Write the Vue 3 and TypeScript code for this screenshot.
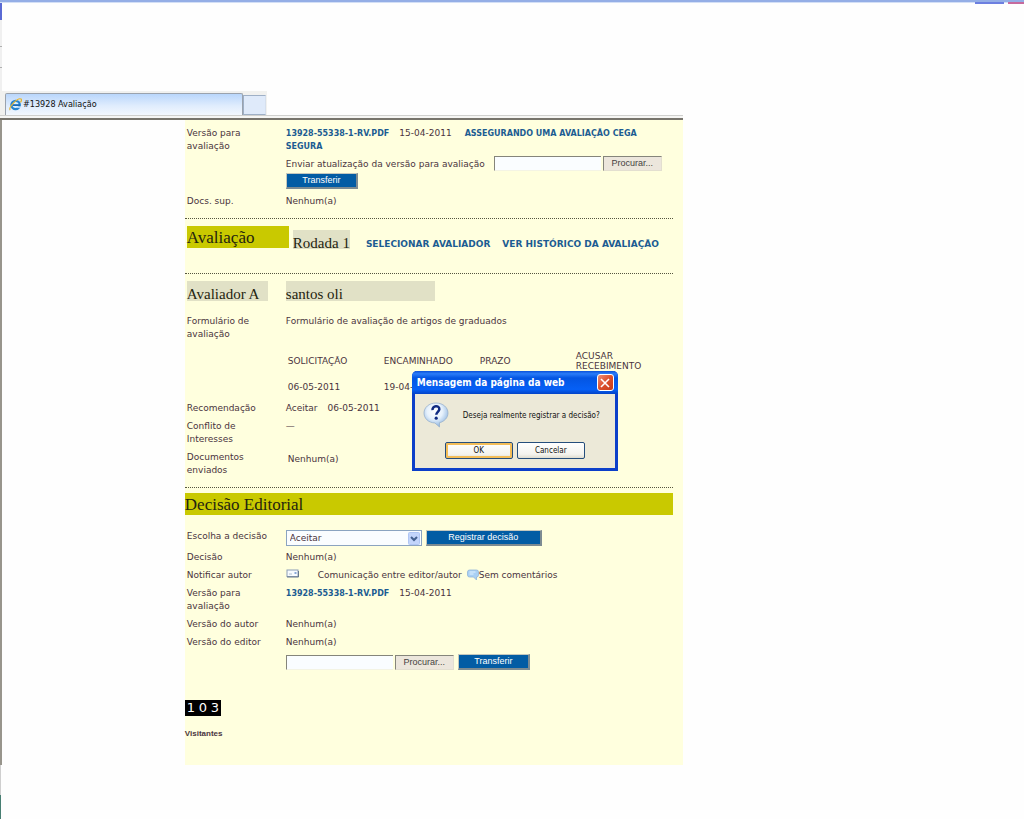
<script setup lang="ts">
import { ref } from 'vue'

interface DateColumn {
  title: string
  value: string
}

const dates: DateColumn[] = [
  { title: 'SOLICITAÇÃO', value: '06-05-2011' },
  { title: 'ENCAMINHADO', value: '19-04-2011' },
  { title: 'PRAZO', value: '' },
  { title: 'ACUSAR RECEBIMENTO', value: '' },
]

const decision = ref('Aceitar')
const reviewFile = ref('')
const editorFile = ref('')
const dialogOpen = ref(true)
</script>

<template>
  <div class="window">
    <header class="chrome">
      <div class="titlebar"><span class="caption-blue"></span><span class="caption-red"></span></div>
      <div class="toolbar-space"><div class="edge-top"></div></div>
      <nav class="tabs">
        <button class="tab" type="button">
          <svg class="ie" viewBox="0 0 13 13" aria-hidden="true">
            <circle cx="6.6" cy="7" r="4.2" fill="#d9f1ff" stroke="#2585cf" stroke-width="2.3" />
            <path d="M3.5 7.1H10.8" stroke="#1769b6" stroke-width="1.8" />
            <path d="M8.2 8.4H12v1.4H8.2z" fill="#d5e8fd" />
            <path d="M1.2 12C-.9 9.4 8.8-.7 12 1c1 .6.3 2.2-.5 3.4" fill="none" stroke="#e8b62e" stroke-width="1.2" />
          </svg>
          <span>#13928 Avaliação</span>
        </button>
        <button class="new-tab" type="button" aria-label="Nova guia"></button>
      </nav>
      <div class="frame-line"></div>
    </header>

    <div class="viewport">
      <main class="page">
        <section>
          <div class="row">
            <div class="label">Versão para avaliação</div>
            <div class="value">
              <p>
                <a href="#">13928-55338-1-RV.PDF</a><span class="date">15-04-2011</span><a href="#">ASSEGURANDO UMA AVALIAÇÃO CEGA SEGURA</a>
              </p>
              <div class="upload">
                <label for="review-file">Enviar atualização da versão para avaliação</label>
                <div class="picker">
                  <input id="review-file" v-model="reviewFile" type="text" />
                  <button class="browse" type="button">Procurar...</button>
                </div>
              </div>
              <button class="action" type="button">Transferir</button>
            </div>
          </div>
          <div class="row docs">
            <div class="label">Docs. sup.</div>
            <div class="value">Nenhum(a)</div>
          </div>
        </section>

        <section class="round">
          <h2>Avaliação</h2>
          <h3>Rodada 1</h3>
          <a class="select-reviewer" href="#">SELECIONAR AVALIADOR</a>
          <a class="history" href="#">VER HISTÓRICO DA AVALIAÇÃO</a>
        </section>

        <section class="reviewer">
          <div class="row names">
            <div class="label"><h3>Avaliador A</h3></div>
            <div class="value"><h3>santos oli</h3></div>
          </div>
          <div class="row">
            <div class="label">Formulário de avaliação</div>
            <div class="value">Formulário de avaliação de artigos de graduados</div>
          </div>
          <div class="row dates-row">
            <div class="label"></div>
            <table>
              <thead>
                <tr><th v-for="d in dates" :key="d.title" scope="col"><span>{{ d.title }}</span></th></tr>
              </thead>
              <tbody>
                <tr><td v-for="d in dates" :key="d.title">{{ d.value }}</td></tr>
              </tbody>
            </table>
          </div>
          <div class="row">
            <div class="label">Recomendação</div>
            <div class="value">Aceitar<span class="date">06-05-2011</span></div>
          </div>
          <div class="row">
            <div class="label">Conflito de Interesses</div>
            <div class="value">—</div>
          </div>
          <div class="row">
            <div class="label">Documentos enviados</div>
            <div class="value sent">Nenhum(a)</div>
          </div>
        </section>

        <section class="decision">
          <h2>Decisão Editorial</h2>
          <div class="row">
            <label class="label" for="decision">Escolha a decisão</label>
            <div class="value controls">
              <div class="combo">
                <select id="decision" v-model="decision">
                  <option>Aceitar</option>
                </select>
                <svg viewBox="0 0 12 13" aria-hidden="true">
                  <rect x=".5" y=".5" width="11" height="12" rx="1" fill="#c3d5fb" stroke="#b0c6f4" />
                  <path d="M3 5l3 3 3-3" fill="none" stroke="#44618f" stroke-width="2" />
                </svg>
              </div>
              <button class="action wide" type="button" @click="dialogOpen = true">Registrar decisão</button>
            </div>
          </div>
          <div class="row">
            <div class="label">Decisão</div>
            <div class="value">Nenhum(a)</div>
          </div>
          <div class="row">
            <div class="label">Notificar autor</div>
            <div class="value notify">
              <a class="mail" href="#" aria-label="Notificar autor">
                <svg viewBox="0 0 13 9" aria-hidden="true">
                  <rect x="1" y="1" width="11" height="6.500" fill="#f7fbff" stroke="#8c9eb5" />
                  <path d="M1 8H12.500V2" fill="none" stroke="#66788f" />
                  <path d="M3 5H6" stroke="#b2c2d4" />
                  <path d="M8.500 3H10.500V5H8.500z" fill="#8aa9d6" />
                </svg>
              </a>
              <span>Comunicação entre editor/autor</span>
              <a class="comment" href="#" aria-label="Comentários">
                <svg viewBox="0 0 12 12" aria-hidden="true">
                  <path d="M2.500 1h7Q11.500 1 11.500 3v3q0 2-2 2H9.500v3L6.500 8H2.500Q.5 8 .5 6V3Q.5 1 2.500 1z" fill="#a9d0f4" stroke="#92b5d9" stroke-width=".8" />
                  <path d="M2.500 3h6M2.500 5h4" stroke="#e1f2ff" />
                </svg>
              </a>
              <span>Sem comentários</span>
            </div>
          </div>
          <div class="row">
            <div class="label">Versão para avaliação</div>
            <div class="value"><a href="#">13928-55338-1-RV.PDF</a><span class="date">15-04-2011</span></div>
          </div>
          <div class="row">
            <div class="label">Versão do autor</div>
            <div class="value">Nenhum(a)</div>
          </div>
          <div class="row">
            <div class="label">Versão do editor</div>
            <div class="value">Nenhum(a)</div>
          </div>
          <div class="row">
            <div class="label"></div>
            <div class="value controls">
              <div class="picker">
                <input v-model="editorFile" type="text" aria-label="Versão do editor" />
                <button class="browse" type="button">Procurar...</button>
              </div>
              <button class="action" type="button">Transferir</button>
            </div>
          </div>
        </section>

        <footer>
          <div class="counter"><span>1</span><span>0</span><span>3</span></div>
          <div class="visitors">Visitantes</div>
        </footer>

        <div v-if="dialogOpen" class="dialog" role="dialog" aria-labelledby="dialog-title">
          <div class="dialog-bar">
            <span id="dialog-title">Mensagem da página da web</span>
            <button class="close" type="button" aria-label="Fechar" @click="dialogOpen = false">
              <svg viewBox="0 0 10 10" aria-hidden="true"><path d="M1 1l8 8M9 1L1 9" stroke="#fff" stroke-width="1.600" /></svg>
            </button>
          </div>
          <div class="dialog-body">
            <div class="message">
              <svg viewBox="0 0 26 26" aria-hidden="true">
                <defs>
                  <radialGradient id="bubble" cx=".45" cy=".35" r=".65">
                    <stop offset="0" stop-color="#fff" />
                    <stop offset=".5" stop-color="#e6f1fc" />
                    <stop offset="1" stop-color="#8db4df" />
                  </radialGradient>
                </defs>
                <path d="M13 1c7 0 12 4.500 12 10 0 4.600-3.500 8.500-8.500 9.700V25l-4.600-4C5.500 20.700 1 16.500 1 11 1 5.500 6 1 13 1z" fill="url(#bubble)" stroke="#91aac8" stroke-width=".7" />
                <path d="M9.500 8.200C9 3 16.700 3 16.300 7.300c-.2 2.400-3 2.700-3 5.400" fill="none" stroke="#102b82" stroke-width="2.500" />
                <circle cx="13.200" cy="16.200" r="1.600" fill="#102b82" />
              </svg>
              <span>Deseja realmente registrar a decisão?</span>
            </div>
            <div class="dialog-actions">
              <button class="ok" type="button" @click="dialogOpen = false">OK</button>
              <button type="button" @click="dialogOpen = false">Cancelar</button>
            </div>
          </div>
        </div>
      </main>
    </div>
    <div class="edge-bottom"></div>
  </div>
</template>

<style>
body {
  margin: 0;
  background: #fefefe;
}
</style>

<style scoped>
* {
  box-sizing: border-box;
}
.window {
  display: flex;
  flex-direction: column;
  min-height: 100vh;
  font: 9px/13px "DejaVu Sans", Verdana, sans-serif;
  color: #4a3440;
}
button,
input,
select {
  font: inherit;
  margin: 0;
  padding: 0;
}
h2,
h3,
p {
  margin: 0;
}
h2,
h3 {
  font-family: "Liberation Serif", Georgia, serif;
  font-weight: 400;
  color: #24240f;
}
a {
  color: #1c5c92;
  font-size: 8px;
  font-weight: 700;
  text-decoration: none;
}
svg {
  display: block;
}

/* Browser frame */
.titlebar {
  display: flex;
  justify-content: flex-end;
  height: 3px;
  padding-top: 2px;
  background: linear-gradient(#94aee6 2px, #d3dff6 2px);
}
.caption-blue {
  width: 29px;
  height: 2px;
  margin-right: 4px;
  background: #6c7fe0;
}
.caption-red {
  width: 16px;
  height: 2px;
  background: #c66a9d;
}
.toolbar-space {
  height: 88px;
}
.edge-top {
  width: 2px;
  height: 88px;
  background: linear-gradient(#5a6ad4 17px, #f0f0f0 17px, #f0f0f0 43px, #b0b0b0 43px, #b0b0b0 44px, #f0f0f0 44px, #f0f0f0 64px, #b0b0b0 64px, #b0b0b0 65px, #f0f0f0 65px);
}
.tabs {
  display: flex;
  align-items: flex-end;
  width: 267px;
  height: 24px;
  padding-left: 5px;
  background: #f1f1ef;
}
.tab {
  display: flex;
  align-items: center;
  gap: 1px;
  width: 238px;
  height: 22px;
  padding-left: 3px;
  border: 1px solid #9aa2ad;
  border-bottom: 0;
  border-radius: 2px 2px 0 0;
  background: linear-gradient(#b9d6fb, #dfecfd 55%, #f3f8fe);
  color: #111;
  font: 9px/13px "DejaVu Sans Condensed", "DejaVu Sans", sans-serif;
}
.ie {
  width: 13px;
  height: 13px;
}
.new-tab {
  width: 23px;
  height: 20px;
  border: 1px solid #9fb0c6;
  border-right-color: #d5dfed;
  background: #dfeafa;
}
.frame-line {
  width: 66.7%;
  height: 5px;
  border-top: 1px solid #d0d0ce;
  border-bottom: 2px solid #77746c;
  background: #f6f6f4;
}

/* Page */
.viewport {
  display: grid;
  grid-template-columns: 183fr 499fr 341fr;
  border-left: 2px solid #98958c;
}
.page {
  grid-column: 2;
  position: relative;
  min-width: 0;
  padding: 7px 10px 25px 0;
  background: #ffffde;
}
.edge-bottom {
  flex: 1;
  width: 1px;
  background: linear-gradient(#cfcfcf 30px, #477e72 30px);
}
section + section {
  border-top: 1px dotted #55553f;
}
.row {
  display: grid;
  grid-template-columns: 88px minmax(0, 1fr);
  column-gap: 11px;
  padding-left: 2px;
  margin-bottom: 5px;
}
.label {
  padding-right: 4px;
}
.date {
  margin: 0 13px 0 10px;
}
.upload {
  display: flex;
  align-items: flex-end;
  gap: 9px;
  margin: 3px 0 2px;
}
.docs {
  margin-top: 6px;
}
.picker {
  display: flex;
  gap: 2px;
}
.picker input {
  width: 107px;
  height: 15px;
  border: 1px solid #85857b;
  border-right: 0;
  border-bottom-color: #f4f4e4;
  background: #fafdff;
}
.browse {
  width: 59px;
  height: 15px;
  border: 1px solid #85857b;
  border-right-color: #e3dfd0;
  border-bottom-color: #e3dfd0;
  background: #ece6dc;
  color: #45423f;
  font: 9px/13px "Liberation Sans", Arial, sans-serif;
}
.action {
  display: block;
  width: 72px;
  height: 16px;
  border: 1px solid #c4c8bd;
  border-right: 2px solid #7c8b92;
  border-bottom: 2px solid #7c8b92;
  background: #025ca4;
  color: #fff;
  font: 9px/13px "Liberation Sans", Arial, sans-serif;
}
.action.wide {
  width: 116px;
}
.controls {
  display: flex;
  align-items: center;
  gap: 4px;
}

.round {
  display: flex;
  align-items: flex-start;
  height: 55px;
  margin-top: 10px;
  padding: 7px 0 0 2px;
}
.round h2 {
  width: 102px;
  height: 22px;
  margin-right: 4px;
  background: #c9c900;
  font-size: 17px;
  line-height: 24px;
}
.round h3 {
  height: 19px;
  margin: 4px 16px 0 0;
  background: #e1e1c6;
  font-size: 15px;
  line-height: 26px;
}
.round a {
  margin-top: 12px;
  font-size: 9px;
}
.history {
  margin-left: 12px;
}

.reviewer {
  padding-top: 7px;
}
.names {
  margin-bottom: 14px;
}
.names h3 {
  height: 20px;
  background: #e1e1c6;
  font-size: 15px;
  line-height: 27px;
}
.names .label {
  padding-right: 7px;
}
.names .value h3 {
  width: 149px;
}
.dates-row {
  margin: 10px 0 8px;
}
table {
  width: 384px;
  table-layout: fixed;
  border-collapse: collapse;
}
th,
td {
  padding: 0 0 0 2px;
  font-weight: 400;
  text-align: left;
}
th {
  height: 20px;
  line-height: 10px;
}
th span {
  display: block;
  max-width: 70px;
}
td {
  height: 23px;
  padding-top: 10px;
}
.sent {
  padding: 2px 0 0 2px;
}

.decision {
  margin-top: 10px;
  padding-top: 5px;
}
.decision h2 {
  height: 22px;
  margin-bottom: 15px;
  background: #c9c900;
  font-size: 17px;
  line-height: 23px;
}
.combo {
  display: grid;
  align-items: center;
  width: 136px;
  height: 16px;
}
.combo select,
.combo svg {
  grid-area: 1 / 1;
}
.combo select {
  width: 136px;
  height: 16px;
  padding-left: 3px;
  border: 1px solid #8ba4c0;
  border-radius: 0;
  background: #fafdff;
  color: inherit;
  appearance: none;
}
.combo svg {
  justify-self: end;
  width: 12px;
  height: 13px;
  margin-right: 2px;
  pointer-events: none;
}
.notify {
  display: flex;
}
.mail svg {
  width: 13px;
  height: 9px;
  margin-right: 19px;
}
.comment svg {
  width: 12px;
  height: 12px;
  margin-left: 5px;
}

footer {
  margin-top: 30px;
}
.counter {
  display: flex;
  justify-content: space-around;
  width: 36px;
  height: 16px;
  background: #000;
  color: #fff;
  font: 13px/16px "DejaVu Sans", Verdana, sans-serif;
}
.visitors {
  margin-top: 11px;
  font: 700 8px/13px "Liberation Sans", Arial, sans-serif;
}

/* Confirmation window, floating over the page */
.dialog {
  position: absolute;
  top: 251px;
  left: 227px;
  width: 206px;
  border: 3px solid #0c3fc9;
  border-top: 0;
  border-radius: 5px 5px 0 0;
  background: #ece9d8;
  color: #111;
}
.dialog-bar {
  display: flex;
  align-items: center;
  justify-content: space-between;
  height: 23px;
  margin: 0 -3px;
  padding: 0 4px 0 5px;
  border-radius: 5px 5px 0 0;
  background: linear-gradient(#0a50d8, #2a7cf8 12%, #0455e2 30%, #0660f6 80%, #0343c8);
  color: #fff;
  font: 700 10px/13px "DejaVu Sans Condensed", "DejaVu Sans", sans-serif;
}
.close {
  display: grid;
  place-items: center;
  width: 17px;
  height: 17px;
  border: 1px solid #fff;
  border-radius: 3px;
  background: linear-gradient(135deg, #ee9078, #dc4f2c 50%, #c63c18);
}
.close svg {
  width: 10px;
  height: 10px;
}
.dialog-body {
  padding: 8px 0 9px;
  font: 8px/13px "DejaVu Sans Condensed", "DejaVu Sans", sans-serif;
}
.message {
  display: flex;
  align-items: center;
  gap: 14px;
  padding-left: 8px;
  white-space: nowrap;
}
.message svg {
  flex: none;
  width: 26px;
  height: 26px;
}
.dialog-actions {
  display: flex;
  gap: 4px;
  margin-top: 14px;
  padding-left: 30px;
}
.dialog-actions button {
  width: 68px;
  height: 17px;
  border: 1px solid #254e7c;
  border-radius: 2px;
  background: linear-gradient(#fff, #f4f3ee 75%, #dfdccf);
  color: #111;
}
.dialog-actions .ok {
  box-shadow: inset 0 0 0 2px #f3bd58;
}
</style>
